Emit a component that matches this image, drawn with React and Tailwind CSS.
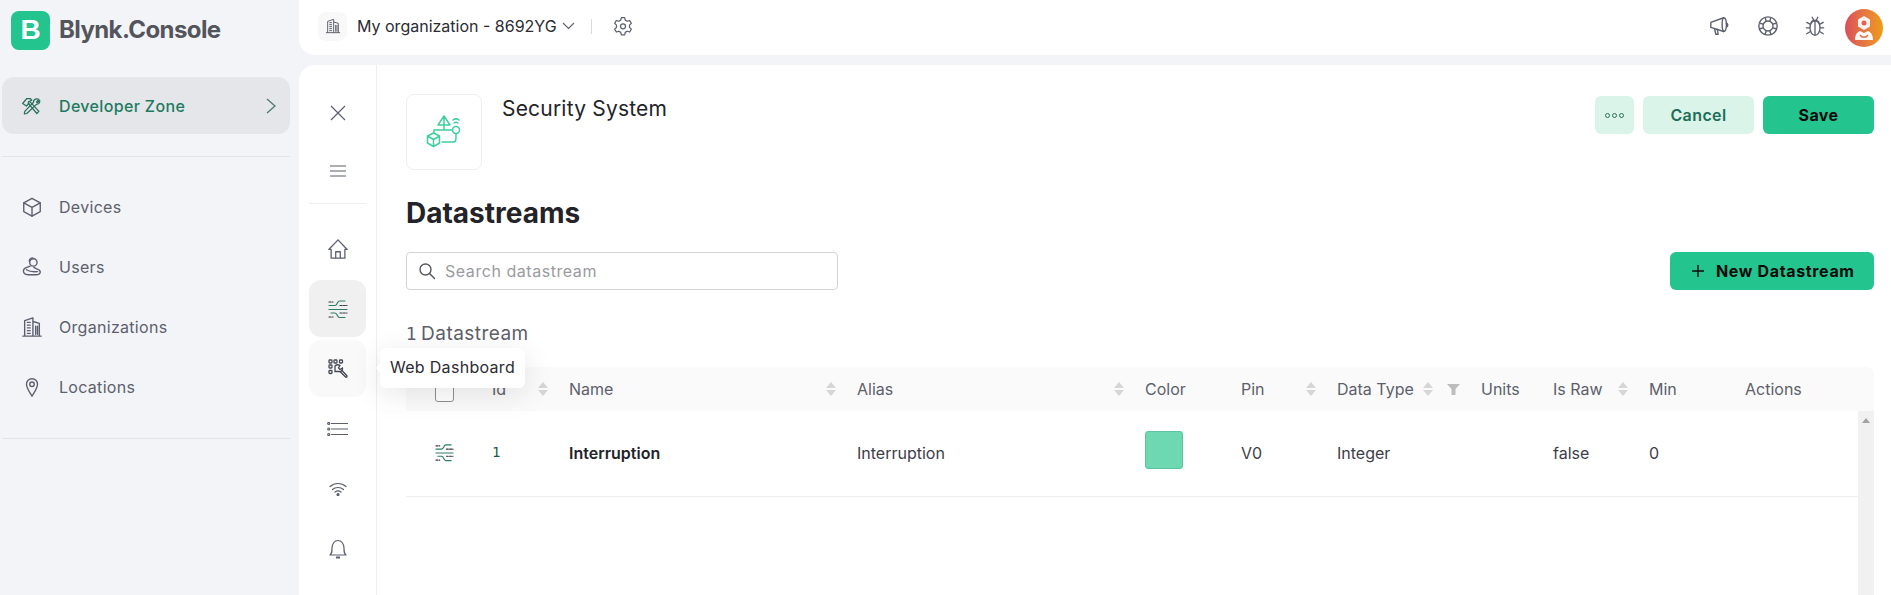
const S = ({ size = 20, children, className = "", vb = 24, sw = 1.5 }) => (
  <svg width={size} height={size} viewBox={`0 0 ${vb} ${vb}`} fill="none" stroke="currentColor" strokeWidth={sw} strokeLinecap="round" strokeLinejoin="round" className={className}>{children}</svg>
);

const Tools = () => (
  <S size={20} className="text-[#2a6f5c]"><path d="M2 9l5-6 4 0 2 2-2 1-2 1 .5 2-3 3z" /><path d="M8.500 8.500L19 21l2.500-2.500L11 7" /><path d="M21.500 4l-3 3 1 1 3-2.500c.3 3-1.500 4.500-4 4.500L7 21l-3 .5.500-3L15 7.500c-.3-3 2.500-5 6.500-3.500z" /></S>
);
const Box = () => (
  <S size={22} className="text-[#5b5f6e]"><path d="M12 2.500l9 5v9.500l-9 5-9-5V7.500z" /><path d="M3 7.500l9 5 9-5M12 12.500V22" /></S>
);
const Users = () => (
  <S size={22} className="text-[#5b5f6e]"><circle cx="13.500" cy="7" r="4" /><path d="M9 5.500a4 4 0 0 1 4-3.500M10 11l-5 2c-2 1-3 3-2 5 1 2 3 2.500 5 2.500h8c3 0 5-1 5-3s-2-3-4-3.500l-3-1.500M6 15c3 2 7 2.500 12 2" /></S>
);
const Org = ({ size = 22, cls = "text-[#5b5f6e]" }) => (
  <S size={size} className={cls}><path d="M4 22V5l9-3v20M13 6l7 2v14M2 22h20M7 7h3M7 10h3M7 13h3M7 16h3M7 19h3M16 11v9M18 11v9" /></S>
);
const Pin = () => (
  <S size={22} className="text-[#5b5f6e]"><path d="M12 22c-3-5-6-9-6-13a6 6 0 0 1 12 0c0 4-3 8-6 13z" /><circle cx="12" cy="9" r="2.500" /></S>
);
const Stream = ({ size = 20 }) => (
  <svg width={size} height={size} viewBox="0 0 20 20" fill="none" strokeWidth="1.200" strokeLinecap="round" className="shrink-0">
    <path d="M1 6.500h6c2.500 0 2-4.500 4.500-4.500H17M1 10.500h18M3 14h4c2.500 0 2 4.500 4.500 4.500H17" stroke="#2d7d67" />
    <path d="M12 6.500h7M12 14h7M1 3h4M1 18h4" stroke="#33353f" strokeDasharray="2 1.300" />
  </svg>
);
const WebDash = () => (
  <svg width="20" height="20" viewBox="0 0 20 20" fill="none" stroke="#454854" strokeWidth="1.300" strokeLinecap="round">
    <rect x="1" y="1" width="3" height="3" rx=".8" /><rect x="6" y="1" width="3" height="3" rx=".8" /><rect x="11.500" y="1" width="3" height="3" rx=".8" />
    <rect x="1" y="6" width="3" height="3" rx=".8" /><rect x="1" y="11.500" width="3" height="3" rx=".8" />
    <path d="M7 7a4 4 0 0 1 5-.5L10.500 9l1.500 1.500 2.500-1.500c.5 2-1.500 4-3.500 3.500L7 12.500z" />
    <path d="M12 12.500l5.500 5.500c1 .8 2-.5 1.200-1.500L14 11.500" />
  </svg>
);

const SortIcon = () => (
  <span className="flex flex-col gap-[2px] shrink-0">
    <span className="w-0 h-0 border-x-[5px] border-x-transparent border-b-[6px] border-b-[#d6d6d6]" />
    <span className="w-0 h-0 border-x-[5px] border-x-transparent border-t-[6px] border-t-[#d6d6d6]" />
  </span>
);

const navItems = [
  ["Devices", <Box />],
  ["Users", <Users />],
  ["Organizations", <Org />],
  ["Locations", <Pin />],
];

const NavTile = ({ children, cls = "" }) => (
  <div className={`w-[57px] h-[57px] rounded-xl flex items-center justify-center text-[#5b5f6e] ${cls}`}>{children}</div>
);

const headCols = [
  ["Id", true],
  ["Name", true],
  ["Alias", true],
  ["Color", false],
  ["Pin", true],
];

const gridCols = "grid grid-cols-[74px_77px_288px_288px_96px_96px_144px_72px_96px_96px_1fr] items-center";

export default function App() {
  return (
    <div className="flex h-[595px] w-full overflow-hidden bg-[#f2f4f8] text-[#232329] font-['Inter','Liberation_Sans',sans-serif]">
      <aside className="w-[299px] shrink-0 pl-[2px] pr-[9px]">
        <div className="flex items-center pl-[9px] pt-[7px] h-[53px]">
          <div className="w-[39px] h-[39px] rounded-lg bg-[#23c48e] flex items-center justify-center text-white text-[28px] font-bold font-['Liberation_Sans',sans-serif]">B</div>
          <div className="ml-[9px] text-[24px] font-bold tracking-[-0.6px] text-[#54545c]">Blynk.Console</div>
        </div>
        <div className="mt-[24px] h-[57px] rounded-xl bg-[#e4e6ea] flex items-center pl-[19px] pr-[13px] text-[#1f7a60] font-medium text-[16px] tracking-[0.35px]">
          <Tools />
          <span className="ml-[18px] flex-1">Developer Zone</span>
          <svg width="12" height="20" viewBox="0 0 12 20" fill="none" stroke="#4d7a70" strokeWidth="1.300"><path d="M2 3l8 7-8 7" /></svg>
        </div>
        <div className="mt-[22px] h-px bg-[#e2e4e9]" />
        <div className="mt-[20px]">
          {navItems.map(([label, icon]) => (
            <div key={label} className="h-[60px] flex items-center pl-[19px] text-[16px] tracking-[0.3px] text-[#5d5f6b]">
              <span className="w-[22px] flex justify-center">{icon}</span>
              <span className="ml-[16px]">{label}</span>
            </div>
          ))}
        </div>
        <div className="mt-[21px] h-px bg-[#e2e4e9]" />
      </aside>

      <div className="flex-1 min-w-0 flex flex-col">
        <header className="h-[55px] shrink-0 bg-white rounded-bl-2xl flex items-center pl-[19px] pr-[8px] pb-[3px]">
          <div className="w-[29px] h-[29px] rounded-lg bg-[#f8f8f9] flex items-center justify-center">
            <Org size={16} cls="text-[#63656f]" />
          </div>
          <span className="ml-[10px] text-[16px] text-[#2b2b33]">My organization - 8692YG</span>
          <svg className="ml-[5px]" width="13" height="8" viewBox="0 0 13 8" fill="none" stroke="#5d5f6b" strokeWidth="1.100"><path d="M1 1l5.500 5.500L12 1" /></svg>
          <div className="ml-[16px] w-[1.500px] h-[15px] bg-[#d4dce4]" />
          <svg className="ml-[21px] text-[#5b5f6e]" width="20" height="20" viewBox="0 0 24 24" fill="none" stroke="currentColor" strokeWidth="1.500" strokeLinejoin="round">
            <path d="M10 2h4l.7 3 2.300 1.300 3-.9 2 3.500-2.200 2.100v2.600L22 15.700l-2 3.500-3-.9-2.300 1.300-.7 3h-4l-.7-3L7 18.300l-3 .9-2-3.500 2.200-2.100v-2.600L2 8.900l2-3.500 3 .9 2.300-1.300z" />
            <circle cx="12" cy="12.300" r="3" />
          </svg>
          <div className="flex-1" />
          <svg width="22" height="22" viewBox="0 0 24 24" fill="none" stroke="#5b5f6e" strokeWidth="1.500" strokeLinejoin="round" strokeLinecap="round">
            <path d="M2 8l14-5c2 0 3 4 3 8s-1 7-3 7L2 13.500z" /><path d="M16 3c-2 1-2.500 12 0 15M19 9c2 0 2 4 0 4M6 15l1.500 6H10l-1-5.500" />
          </svg>
          <svg className="ml-[26px]" width="22" height="22" viewBox="0 0 24 24" fill="none" stroke="#5b5f6e" strokeWidth="1.500">
            <circle cx="12" cy="12" r="10" /><circle cx="12" cy="12" r="5.500" /><path d="M9 3l1 4M15 3l-1 4M9 21l1-4M15 21l-1-4M3 9l4 1M3 15l4-1M21 9l-4 1M21 15l-4-1" />
          </svg>
          <svg className="ml-[25px]" width="22" height="22" viewBox="0 0 24 24" fill="none" stroke="#5b5f6e" strokeWidth="1.400" strokeLinecap="round">
            <ellipse cx="12" cy="14" rx="5.500" ry="8" /><path d="M7.500 9c1-4 8-4 9 0M12 7v15M9 2.500l1.500 3M15 2.500l-1.500 3M6.500 10L3 8M6.500 14H2.500M7 18l-4 2.500M17.500 10L21 8M17.500 14h4M17 18l4 2.500" />
          </svg>
          <div className="ml-[19px] mt-[3px] w-[38px] h-[38px] rounded-full bg-gradient-to-r from-[#d94f56] to-[#ee9c05] flex items-center justify-center">
            <svg width="24" height="28" viewBox="0 0 24 28" fill="none">
              <path d="M12 2l6 3.500v7L12 16l-6-3.500v-7z" fill="#fff" opacity=".9" />
              <circle cx="12" cy="9" r="2.500" fill="#e0605a" />
              <path d="M3 26c0-5 2-8 5-9l4 2 4-2c3 1 5 4 5 9z" fill="#fff" opacity=".95" />
              <path d="M8 21l2 2h4l2-2" stroke="#d9704a" strokeWidth="1.500" />
            </svg>
          </div>
        </header>

        <main className="relative mt-[10px] flex-1 min-h-0 bg-white rounded-tl-2xl flex overflow-hidden">
          <nav className="w-[78px] shrink-0 border-r border-[#eeeff1] px-[10px] pt-[19px]">
            <div className="flex flex-col gap-px">
              <NavTile><svg width="18" height="18" viewBox="0 0 18 18" fill="none" stroke="currentColor" strokeWidth="1.200"><path d="M2 2l14 14M16 2L2 16" /></svg></NavTile>
              <NavTile><svg width="18" height="14" viewBox="0 0 18 14" fill="none" stroke="currentColor" strokeWidth="1.200"><path d="M1 2h16M1 7h16M1 12h16" /></svg></NavTile>
            </div>
            <div className="mt-[4px] h-px bg-[#eeeff1]" />
            <div className="mt-[16px] flex flex-col gap-[3px]">
              <NavTile><svg width="22" height="22" viewBox="0 0 24 24" fill="none" stroke="currentColor" strokeWidth="1.400" strokeLinejoin="round"><path d="M2 12.500L12 2l10 10.500h-2.500V22h-15v-9.500z" /><path d="M9.500 22v-7h5v7" /></svg></NavTile>
              <NavTile cls="bg-[#f0f0f0]"><Stream size={20} /></NavTile>
              <NavTile cls="bg-[#f9f9f9]"><WebDash /></NavTile>
              <NavTile><svg width="22" height="14" viewBox="0 0 22 14" fill="none" stroke="currentColor" strokeWidth="1.200"><path d="M4 1.500h17M4 7h17M4 12.500h17" /><circle cx="1.700" cy="1.500" r="1" /><circle cx="1.700" cy="7" r="1" /><circle cx="1.700" cy="12.500" r="1" /></svg></NavTile>
              <NavTile><svg width="18" height="14" viewBox="0 0 18 14" fill="none" stroke="currentColor" strokeWidth="1.200" strokeLinecap="round"><path d="M1 4.500c4.500-4 11.500-4 16 0M3.500 7.500c3-2.700 8-2.700 11 0M6 10c1.700-1.400 4.300-1.400 6 0" /><circle cx="9" cy="12.500" r="1" fill="currentColor" /></svg></NavTile>
              <NavTile><svg width="18" height="20" viewBox="0 0 18 20" fill="none" stroke="currentColor" strokeWidth="1.200" strokeLinejoin="round"><path d="M1 16c2-2 2-3 2-7 0-4 2.500-7.500 6-7.500S15 5 15 9c0 4 0 5 2 7z" /><path d="M7 18.500h4" strokeWidth="2" /></svg></NavTile>
            </div>
          </nav>

          <section className="flex-1 min-w-0 pl-[29px] pr-[17px] pt-[29px]">
            <div className="flex items-start">
              <div className="w-[76px] h-[76px] rounded-lg border border-[#eeeeee] flex items-center justify-center">
                <svg width="38" height="38" viewBox="0 0 38 38" fill="none" stroke="#3dd09c" strokeWidth="1.500" strokeLinejoin="round" strokeLinecap="round">
                  <path d="M19 3l6 9H13zM19 3v9" />
                  <path d="M28 7c2-1.500 4-1.500 6 0M29 10c1-.7 3-.7 4 0" />
                  <circle cx="31" cy="17" r="3.500" />
                  <path d="M27.500 17H19v-5M19 17H9v3" />
                  <path d="M8.500 20l6 3v7l-6 3.500L2.500 30v-7zM2.500 23l6 3.500 6-3.500M8.500 26.500v7" />
                  <path d="M17 29h12c2 0 2-2 2-8" />
                </svg>
              </div>
              <h2 className="ml-[20px] mt-[2px] text-[21px] tracking-[0.2px] leading-[26px] text-[#232329]">Security System</h2>
              <div className="flex-1" />
              <div className="mt-[2px] flex gap-[9px]">
                <div className="w-[39px] h-[38px] rounded-md bg-[#dbf4ea] flex items-center justify-center gap-[2px]">
                  <span className="w-[5px] h-[5px] rounded-full border border-[#2a6f5c]" />
                  <span className="w-[5px] h-[5px] rounded-full border border-[#2a6f5c]" />
                  <span className="w-[5px] h-[5px] rounded-full border border-[#2a6f5c]" />
                </div>
                <div className="w-[111px] h-[38px] rounded-md bg-[#dbf4ea] flex items-center justify-center text-[16px] font-semibold tracking-[0.4px] text-[#1c6e57]">Cancel</div>
                <div className="w-[111px] h-[38px] rounded-md bg-[#23c48e] flex items-center justify-center text-[16px] font-bold tracking-[0.4px] text-[#0b0b0b]">Save</div>
              </div>
            </div>

            <h1 className="mt-[26px] text-[28px] leading-[34px] font-bold text-[#232329]">Datastreams</h1>

            <div className="mt-[22px] flex justify-between">
              <div className="w-[432px] h-[38px] rounded border border-[#d4d4d6] flex items-center pl-[11px]">
                <svg width="18" height="18" viewBox="0 0 18 18" fill="none" stroke="#55575f" strokeWidth="1.400" strokeLinecap="round"><circle cx="7.500" cy="7.500" r="5.500" /><path d="M11.500 11.500l5 5" /></svg>
                <span className="ml-[9px] text-[16px] tracking-[0.55px] text-[#9a9aa0]">Search datastream</span>
              </div>
              <div className="w-[204px] h-[38px] rounded-md bg-[#23c48e] flex items-center pl-[21px] text-[16px] font-bold tracking-[0.65px] text-[#0b0b0b]">
                <svg width="14" height="14" viewBox="0 0 14 14" fill="none" stroke="#0b0b0b" strokeWidth="1.400"><path d="M7 1v12M1 7h12" /></svg>
                <span className="ml-[11px]">New Datastream</span>
              </div>
            </div>

            <div className="mt-[32px] mb-[-1px] text-[19px] tracking-[0.45px] leading-[24px] text-[#5d5f6b]"><span className="font-['DejaVu_Sans',sans-serif] text-[17px] tracking-[-1.500px]">1</span> Datastream</div>

            <div className="mt-[22px] text-[16px]">
              <div className={`${gridCols} h-[44px] bg-[#fafafa] rounded-tr-lg text-[#5d5f6b]`}>
                <div className="pl-[29px]"><div className="mt-[6px] w-[19px] h-[19px] rounded-[3px] border border-[#8e8e94] bg-white" /></div>
                {headCols.map(([label, sort]) => (
                  <div key={label} className="pl-3 pr-[9px] flex items-center justify-between"><span>{label}</span>{sort && <SortIcon />}</div>
                ))}
                <div className="pl-3 pr-[9px] flex items-center">
                  <span>Data Type</span>
                  <span className="ml-[9px]"><SortIcon /></span>
                  <svg className="ml-[14px]" width="13" height="11" viewBox="0 0 13 11"><path d="M0 0h13L8.500 5v6h-4V5z" fill="#bdbdbd" /></svg>
                </div>
                <div className="pl-3">Units</div>
                <div className="pl-3 pr-[9px] flex items-center justify-between"><span>Is Raw</span><SortIcon /></div>
                <div className="pl-3">Min</div>
                <div className="pl-3">Actions</div>
              </div>
              <div className="flex h-[184px]">
                <div className="flex-1 min-w-0">
                  <div className={`${gridCols} h-[86px] pb-[2px] border-b border-[#eeeff1] text-[#3c3e48]`}>
                    <div className="pl-[29px]"><Stream size={19} /></div>
                    <div className="pl-3 text-[#1c5c4c] text-[14px] font-['DejaVu_Sans_Mono',monospace] text-[13px]">1</div>
                    <div className="pl-3 font-semibold text-[#232329]">Interruption</div>
                    <div className="pl-3">Interruption</div>
                    <div className="pl-3"><div className="mb-[6px] w-[38px] h-[38px] rounded-[3px] bg-[#6dd8b1] border border-[#5cc49e]" /></div>
                    <div className="pl-3">V0</div>
                    <div className="pl-3">Integer</div>
                    <div />
                    <div className="pl-3">false</div>
                    <div className="pl-3">0</div>
                    <div />
                  </div>
                </div>
                <div className="w-[16px] shrink-0 bg-[#f1f1f1] flex justify-center pt-[7px]">
                  <span className="w-0 h-0 border-x-[4px] border-x-transparent border-b-[5px] border-b-[#a3a3a3]" />
                </div>
              </div>
            </div>
          </section>

          <div className="absolute left-[81px] top-[283px] h-[40px] w-[145px] pb-[2px] rounded-md bg-white shadow-[0_6px_30px_rgba(0,0,0,0.1)] flex items-center justify-center text-[16px] tracking-[0.3px] text-[#2b2b33]">
            <span className="absolute -left-[4px] top-[15px] w-0 h-0 border-y-[5px] border-y-transparent border-r-[4px] border-r-white" />
            Web Dashboard
          </div>
        </main>
      </div>
    </div>
  );
}
